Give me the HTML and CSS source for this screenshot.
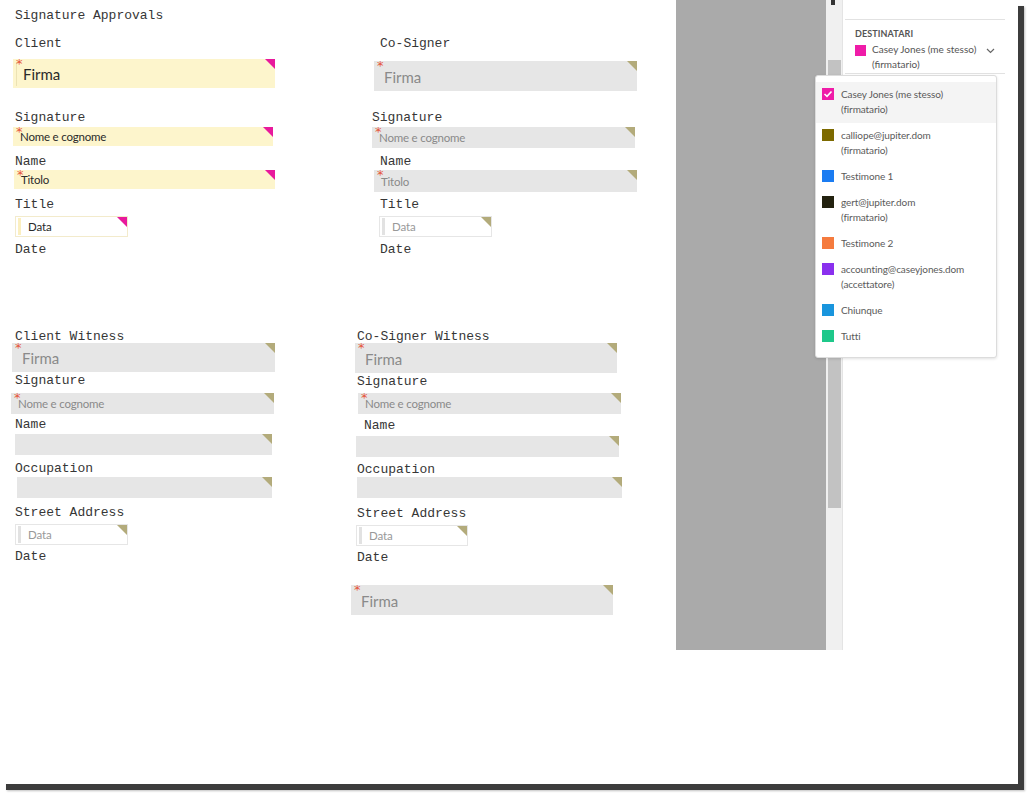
FILE: index.html
```html
<!DOCTYPE html>
<html lang="it">
<head>
<meta charset="utf-8">
<title>Signature Approvals</title>
<link rel="stylesheet" href="styles.css">
</head>
<body>
<div class="frame">
  <main class="doc">
    <section class="col">
      <div class="lbl mt7 ml15">Signature Approvals</div>
      <div class="lbl mt14 ml15">Client</div>
      <div class="fld sig mine mt10 ml13 w262 h29"><span class="req">*</span>Firma</div>
      <div class="lbl mt21 ml15">Signature</div>
      <div class="fld txt mine mt4 ml13 w260 h19"><span class="req">*</span>Nome e cognome</div>
      <div class="lbl mt7 ml15">Name</div>
      <div class="fld txt mine mt3 ml14 w261 h19"><span class="req">*</span>Titolo</div>
      <div class="lbl mt7 ml15">Title</div>
      <div class="fld date mine mt6 ml15 w113 h21">Data</div>
      <div class="lbl mt4 ml15">Date</div>
    </section>
    <section class="col">
      <div class="lbl mt35 ml40">Co-Signer</div>
      <div class="fld sig other mt12 ml34 w263 h30"><span class="req">*</span>Firma</div>
      <div class="lbl mt18 ml32">Signature</div>
      <div class="fld txt other mt4 ml32 w263 h21"><span class="req">*</span>Nome e cognome</div>
      <div class="lbl mt5 ml40">Name</div>
      <div class="fld txt other mt3 ml34 w263 h22"><span class="req">*</span>Titolo</div>
      <div class="lbl mt4 ml40">Title</div>
      <div class="fld date other mt6 ml39 w113 h21">Data</div>
      <div class="lbl mt4 ml40">Date</div>
    </section>
    <section class="col">
      <div class="lbl ml15">Client Witness</div>
      <div class="fld sig other mt1 ml12 w263 h29"><span class="req">*</span>Firma</div>
      <div class="lbl ml15">Signature</div>
      <div class="fld txt other mt7 ml11 w263 h21"><span class="req">*</span>Nome e cognome</div>
      <div class="lbl mt2 ml15">Name</div>
      <div class="fld txt other mt4 ml15 w257 h21"></div>
      <div class="lbl mt5 ml15">Occupation</div>
      <div class="fld txt other mt3 ml17 w255 h21"></div>
      <div class="lbl mt6 ml15">Street Address</div>
      <div class="fld date other mt6 ml15 w113 h21">Data</div>
      <div class="lbl mt3 ml15">Date</div>
    </section>
    <section class="col">
      <div class="lbl ml17">Co-Signer Witness</div>
      <div class="fld sig other mt1 ml15 w262 h30"><span class="req">*</span>Firma</div>
      <div class="lbl ml17">Signature</div>
      <div class="fld txt other mt6 ml18 w263 h21"><span class="req">*</span>Nome e cognome</div>
      <div class="lbl mt3 ml24">Name</div>
      <div class="fld txt other mt5 ml16 w263 h21"></div>
      <div class="lbl mt4 ml17">Occupation</div>
      <div class="fld txt other mt2 ml17 w265 h21"></div>
      <div class="lbl mt7 ml17">Street Address</div>
      <div class="fld date other mt6 ml16 w112 h21">Data</div>
      <div class="lbl mt3 ml17">Date</div>
      <div class="fld sig other mt22 ml11 w262 h30"><span class="req">*</span>Firma</div>
    </section>
  </main>

  <div class="canvas-gray"></div>

  <div class="scrollbar">
    <div class="scroll-arrow"></div>
    <div class="scroll-thumb"></div>
  </div>

  <aside class="panel">
    <div class="panel-top"></div>
    <div class="recipients">
      <div class="sec-title">DESTINATARI</div>
      <div class="recip-row">
        <span class="sw sw-pink"></span>
        <span class="recip-name">Casey Jones (me stesso)<br>(firmatario)</span>
        <svg class="chev" width="9" height="6" viewBox="0 0 9 6"><path d="M1 1 L4.5 4.5 L8 1" fill="none" stroke="#666" stroke-width="1.2"/></svg>
      </div>
    </div>
    <div class="panel-rule"></div>
  </aside>

  <div class="dropdown">
    <div class="dd-item selected">
      <span class="sw sw-pink check"><svg width="10" height="8" viewBox="0 0 10 8"><path d="M1.5 4 L4 6.3 L8.5 1.5" fill="none" stroke="#fff" stroke-width="1.6"/></svg></span>
      <span class="dd-text">Casey Jones (me stesso)<br>(firmatario)</span>
    </div>
    <div class="dd-item"><span class="sw sw-olive"></span><span class="dd-text">calliope@jupiter.dom<br>(firmatario)</span></div>
    <div class="dd-item"><span class="sw sw-blue"></span><span class="dd-text">Testimone 1</span></div>
    <div class="dd-item"><span class="sw sw-dark"></span><span class="dd-text">gert@jupiter.dom<br>(firmatario)</span></div>
    <div class="dd-item"><span class="sw sw-orange"></span><span class="dd-text">Testimone 2</span></div>
    <div class="dd-item"><span class="sw sw-purple"></span><span class="dd-text">accounting@caseyjones.dom<br>(accettatore)</span></div>
    <div class="dd-item"><span class="sw sw-sky"></span><span class="dd-text">Chiunque</span></div>
    <div class="dd-item"><span class="sw sw-green"></span><span class="dd-text">Tutti</span></div>
  </div>
</div>
</body>
</html>
```
FILE: styles.css
```css
* { box-sizing: border-box; }
html, body { margin: 0; padding: 0; background: #ffffff; }
body { width: 1034px; height: 798px; overflow: hidden; }

.frame {
  position: relative;
  width: 1018px;
  height: 784px;
  background: #ffffff;
  display: flex;
  align-items: flex-start;
  box-shadow: 6px 6px 0 #3c3c3c, 7px 7px 2px rgba(0,0,0,0.25);
}

/* ---------- document ---------- */
.doc {
  width: 676px;
  flex: none;
  display: grid;
  grid-template-columns: 340px 336px;
  row-gap: 73px;
  align-items: start;
}
.col { display: flex; flex-direction: column; align-items: flex-start; }

.lbl {
  font-family: "Liberation Mono", "Courier New", monospace;
  font-size: 13px;
  line-height: 18px;
  height: 14px;
  color: #363636;
  white-space: nowrap;
}

.fld {
  position: relative;
  flex: none;
  font-family: Lato, "Open Sans", sans-serif;
  white-space: nowrap;
  display: flex;
  align-items: center;
}
.fld::after {
  content: "";
  position: absolute;
  top: 0;
  right: 0;
  width: 10px;
  height: 10px;
  clip-path: polygon(0 0, 100% 0, 100% 100%);
}
.mine { background: #fdf5cc; color: #2a2a2a; }
.mine::after { background: #e8199c; }
.other { background: #e6e6e6; color: #8a8a8a; }
.other::after { background: #b3ab7b; }

.req {
  position: absolute;
  left: 3px;
  top: -2px;
  color: #e5573a;
  font-family: "DejaVu Sans", sans-serif;
  font-size: 13px;
  line-height: 13px;
}
.sig { font-size: 15px; padding: 1px 0 0 10px; }
.sig.mine::before {
  content: "";
  position: absolute;
  left: 3px; top: 3px; bottom: 2px;
  width: 1px;
  background: #ece2b4;
}
.txt { font-size: 11.5px; padding: 0 0 0 7px; letter-spacing: -0.2px; }
.date { font-size: 11.5px; padding: 0 0 0 12px; background: #fff; letter-spacing: -0.1px; }
.date::before {
  content: "";
  position: absolute;
  left: 2px; top: 1px; bottom: 1px;
  width: 3px;
}
.date.mine { border: 1px solid #f3ebcc; color: #2a2a2a; }
.date.mine::before { background: #fbefc0; }
.date.other { border: 1px solid #e6e6e6; color: #999; }
.date.other::before { background: #e2e2e2; }

/* spacing utilities (document coordinates) */
.mt1 { margin-top: 1px; } .mt2 { margin-top: 2px; } .mt3 { margin-top: 3px; }
.mt4 { margin-top: 4px; } .mt5 { margin-top: 5px; } .mt6 { margin-top: 6px; }
.mt7 { margin-top: 7px; } .mt10 { margin-top: 10px; } .mt12 { margin-top: 12px; }
.mt14 { margin-top: 14px; } .mt18 { margin-top: 18px; } .mt21 { margin-top: 21px; }
.mt22 { margin-top: 22px; } .mt35 { margin-top: 35px; }
.ml11 { margin-left: 11px; } .ml12 { margin-left: 12px; } .ml13 { margin-left: 13px; }
.ml14 { margin-left: 14px; } .ml15 { margin-left: 15px; } .ml16 { margin-left: 16px; }
.ml17 { margin-left: 17px; } .ml18 { margin-left: 18px; } .ml24 { margin-left: 24px; }
.ml32 { margin-left: 32px; } .ml34 { margin-left: 34px; } .ml39 { margin-left: 39px; }
.ml40 { margin-left: 40px; }
.w112 { width: 112px; } .w113 { width: 113px; } .w255 { width: 255px; }
.w257 { width: 257px; } .w260 { width: 260px; } .w261 { width: 261px; }
.w262 { width: 262px; } .w263 { width: 263px; } .w265 { width: 265px; }
.h19 { height: 19px; } .h21 { height: 21px; } .h22 { height: 22px; }
.h29 { height: 29px; } .h30 { height: 30px; }

/* ---------- gray canvas + scrollbar ---------- */
.canvas-gray {
  width: 150px;
  height: 650px;
  flex: none;
  background: #aaaaaa;
}
.scrollbar {
  width: 17px;
  height: 650px;
  flex: none;
  background: #f0f0f0;
  border-right: 1px solid #e4e4e4;
  display: flex;
  flex-direction: column;
  align-items: center;
}
.scroll-arrow {
  width: 4px;
  height: 5px;
  background: #333;
  margin-left: -2px;
}
.scroll-thumb {
  margin-top: 55px;
  width: 13px;
  height: 448px;
  background: #c2c2c2;
}

/* ---------- right panel ---------- */
.panel {
  flex: 1;
  height: 784px;
  font-family: Lato, "Open Sans", sans-serif;
  color: #555;
}
.panel-top {
  height: 20px;
  margin: 0 13px 0 2px;
  border-bottom: 1px solid #e2e2e2;
}
.recipients { padding: 8px 0 0 12px; }
.sec-title {
  font-size: 9px;
  font-weight: 700;
  color: #555;
  line-height: 12px;
  letter-spacing: 0.1px;
}
.recip-row {
  display: flex;
  align-items: flex-start;
  margin-top: 2px;
}
.recip-row .sw { margin-top: 3px; width: 11px; height: 11px; }
.recip-name {
  margin-left: 6px;
  font-size: 10px;
  line-height: 15px;
  color: #555;
}
.chev { margin: 6px 0 0 10px; }
.panel-rule {
  margin: 1px 13px 0 2px;
  border-top: 1px solid #e2e2e2;
}

/* ---------- dropdown ---------- */
.dropdown {
  position: absolute;
  left: 815px;
  top: 75px;
  width: 182px;
  background: #fff;
  border: 1px solid #dcdcdc;
  border-radius: 3px;
  box-shadow: 0 1px 3px rgba(0,0,0,0.12);
  padding: 6px 0 7px;
  font-family: Lato, "Open Sans", sans-serif;
}
.dd-item {
  display: flex;
  align-items: flex-start;
  padding: 5px 0 6px 6px;
}
.dd-item.selected { background: #f4f4f4; }
.dd-text {
  margin-left: 7px;
  font-size: 10px;
  line-height: 15px;
  color: #5a5a5a;
  white-space: nowrap;
  letter-spacing: -0.1px;
}
.sw {
  flex: none;
  display: inline-flex;
  align-items: center;
  justify-content: center;
  width: 12px;
  height: 12px;
  margin-top: 1px;
}
.sw-pink { background: #ef1ca8; }
.sw-olive { background: #7d6a00; }
.sw-blue { background: #1b7cf2; }
.sw-dark { background: #23220f; }
.sw-orange { background: #f57b3e; }
.sw-purple { background: #8a30ee; }
.sw-sky { background: #1995dd; }
.sw-green { background: #1ec88a; }
```
